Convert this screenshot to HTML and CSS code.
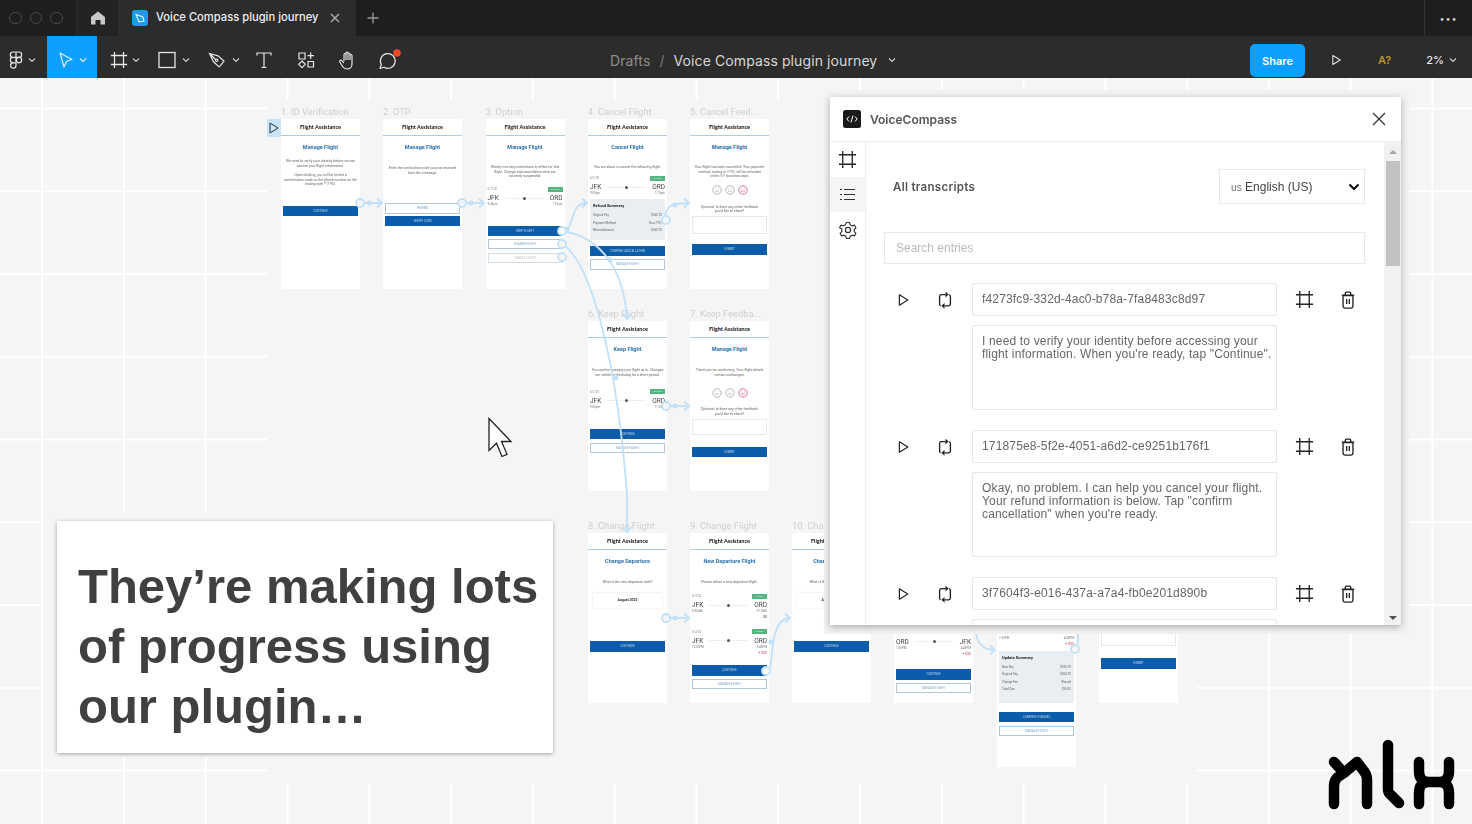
FILE: index.html
```html
<!DOCTYPE html>
<html lang="en">
<head>
  <meta charset="UTF-8">
  <title>Voice Compass plugin journey</title>
  <link rel="stylesheet" href="styles.css">
</head>
<body>
  <!-- shared icons -->
  <svg class="sprite" width="0" height="0">
    <symbol id="i-frame" viewBox="0 0 20 20"><path d="M5 1v18M15 1v18M1 5h18M1 15h18" fill="none" stroke="currentColor" stroke-width="1.4"/></symbol>
    <symbol id="i-play" viewBox="0 0 20 20"><path d="M5.5 3.5v13l10.5-6.5z" fill="none" stroke="currentColor" stroke-width="1.5" stroke-linejoin="round"/></symbol>
    <symbol id="i-loop" viewBox="0 0 20 20"><path d="M5 16.5Q4 16 4 14.5V6q0-2 2-2h4.500M14.500 4Q16 4.500 16 6v8.500q0 2-2 2H9.500" fill="none" stroke="currentColor" stroke-width="1.500"/><path d="M10.500 .8L14 4l-3.500 3.200zM9.500 13.300L6 16.500l3.500 3.200z" fill="currentColor"/></symbol>
    <symbol id="i-trash" viewBox="0 0 20 20"><path d="M4.500 5h11v12a2 2 0 0 1-2 2h-7a2 2 0 0 1-2-2zM3 4.500h14M7 4.500V2.500q0-1.200 1.200-1.200h3.600q1.200 0 1.200 1.200v2M8.500 9v5.500M11.500 9v5.500" fill="none" stroke="currentColor" stroke-width="1.500"/></symbol>
    <symbol id="i-chev" viewBox="0 0 8 8"><path d="M1 2.500l3 3 3-3" fill="none" stroke="currentColor" stroke-width="1.1"/></symbol>
    <symbol id="i-face" viewBox="0 0 10 10"><circle cx="5" cy="5" r="4.2" fill="none" stroke="currentColor" stroke-width=".7"/><path d="M3 3.800h.8M6.200 3.800H7M3 6.600c1.200-1 2.800-1 4 0" fill="none" stroke="currentColor" stroke-width=".6"/></symbol>
  </svg>

  <!-- Tabs -->
  <div class="tabbar">
    <div class="traffic"><i></i><i></i><i></i></div>
    <div class="home-tab">
      <svg width="16" height="16" viewBox="0 0 16 16"><path d="M8 1.500L15 7v7.500h-4.500V10h-5v4.500H1V7z" fill="#c9c9c9"/></svg>
    </div>
    <div class="file-tab">
      <svg width="16" height="16" viewBox="0 0 16 16"><rect width="16" height="16" rx="3" fill="#1b9be8"/><path d="M4 4.500l7 2.500 1 4-5 .8z" fill="none" stroke="#e7f5ff" stroke-width="1.100"/></svg>
      <span class="file-name">Voice Compass plugin journey</span>
      <svg class="tab-close" width="10" height="10" viewBox="0 0 10 10"><path d="M1 1l8 8M9 1l-8 8" stroke="#a8a8a8" stroke-width="1.500"/></svg>
    </div>
    <svg class="tab-add" width="12" height="12" viewBox="0 0 12 12"><path d="M6 .5v11M.5 6h11" stroke="#9a9a9a" stroke-width="1.300"/></svg>
    <div class="tab-more">&#8226;&#8226;&#8226;</div>
  </div>

  <!-- Figma toolbar -->
  <div class="toolbar">
    <div class="tools">
      <div class="tool tool-menu">
        <svg width="14" height="18" viewBox="0 0 14 18" fill="none" stroke="#e6e6e6" stroke-width="1.200"><path d="M7 1H4a2.700 2.700 0 0 0 0 5.400h3zM7 1h3a2.700 2.700 0 0 1 0 5.400H7zM7 6.400H4a2.700 2.700 0 0 0 0 5.400h3zM7 11.800H4A2.700 2.700 0 1 0 7 14.500z"/><circle cx="10" cy="9.100" r="2.700"/></svg>
        <svg class="chev" width="8" height="8"><use href="#i-chev"/></svg>
      </div>
      <div class="tool tool-move">
        <svg width="16" height="18" viewBox="0 0 16 18"><path d="M2 2l12 6.500-5.300 1.700L6 16z" fill="none" stroke="#dff2ff" stroke-width="1.200" stroke-linejoin="round"/></svg>
        <svg class="chev" width="8" height="8"><use href="#i-chev"/></svg>
      </div>
      <div class="tool tool-frame">
        <svg width="18" height="18"><use href="#i-frame"/></svg>
        <svg class="chev" width="8" height="8"><use href="#i-chev"/></svg>
      </div>
      <div class="tool tool-rect">
        <svg width="18" height="18" viewBox="0 0 18 18"><rect x="1" y="1.500" width="16" height="15" fill="none" stroke="currentColor" stroke-width="1.300"/></svg>
        <svg class="chev" width="8" height="8"><use href="#i-chev"/></svg>
      </div>
      <div class="tool tool-pen">
        <svg width="18" height="18" viewBox="0 0 18 18" fill="none" stroke="currentColor" stroke-width="1.200"><path d="M1.500 2.500L10 4.800l6 5.200-4.800 6-5.700-5.200zM1.500 2.500l6 6"/><circle cx="8.700" cy="9.300" r="1.200"/></svg>
        <svg class="chev" width="8" height="8"><use href="#i-chev"/></svg>
      </div>
      <div class="tool tool-text">
        <svg width="16" height="18" viewBox="0 0 16 18" fill="none" stroke="currentColor" stroke-width="1.200"><path d="M1 4.500V2h14v2.500M8 2v14M5.500 16.500h5"/></svg>
      </div>
      <div class="tool tool-comps">
        <svg width="18" height="18" viewBox="0 0 18 18" fill="none" stroke="currentColor" stroke-width="1.200"><path d="M2 2h6v6H2zM11 10.500h5.500V16H11zM5 10l3.300 3.300L5 16.600l-3.300-3.300zM13.700 1.500v6.500M10.500 4.700H17"/></svg>
      </div>
      <div class="tool tool-hand">
        <svg width="20" height="20" viewBox="0 0 20 20" fill="none" stroke="currentColor" stroke-width="1.200" stroke-linejoin="round"><path d="M6 11V4.500a1 1 0 0 1 2 0V3a1 1 0 0 1 2 0v1a1 1 0 0 1 2 0v1.500a1 1 0 0 1 2 0V14c0 3-2 5-4.500 5S5.500 18 4 15.500L1.800 12c-.8-1.400 1-2.400 2-1.300L6 13M8 4.500V10M10 4v6M12 5v5"/></svg>
      </div>
      <div class="tool tool-comment">
        <svg width="22" height="22" viewBox="0 0 22 22"><path d="M3 19.500l1.300-4A7.400 7.400 0 1 1 7 18.300z" fill="none" stroke="currentColor" stroke-width="1.200" stroke-linejoin="round"/><circle cx="20" cy="4" r="3.800" fill="#f24822"/></svg>
      </div>
    </div>
    <div class="crumbs">
      <span class="crumb-root">Drafts</span>
      <span class="crumb-sep">/</span>
      <span class="crumb-file">Voice Compass plugin journey</span>
      <svg class="chev" width="8" height="8"><use href="#i-chev"/></svg>
    </div>
    <div class="actions">
      <button class="share">Share</button>
      <svg class="present" width="14" height="14"><use href="#i-play"/></svg>
      <span class="missing">A?</span>
      <span class="zoom">2%</span>
      <svg class="chev" width="8" height="8"><use href="#i-chev"/></svg>
    </div>
  </div>

  <!-- Canvas -->
  <div class="canvas">
    <div class="mask-section"></div>

    <div class="flow-start">
      <svg width="10" height="12" viewBox="0 0 10 12"><path d="M1 1v10l8-5z" fill="none" stroke="#333" stroke-width="1"/></svg>
    </div>

    <div class="frame f1">
      <div class="frame-label">1. ID Verification</div>
      <div class="frame-head">Flight Assistance</div>
      <div class="frame-title">Manage Flight</div>
      <p class="frame-text mt9">We need to verify your identity before we can<br>access your flight information.</p>
      <p class="frame-text mt5">Upon clicking, you will be texted a<br>confirmation code on the phone number on file<br>ending with **7792.</p>
      <div class="btn mt19">CONTINUE</div>
    </div>

    <div class="frame f2">
      <div class="frame-label">2. OTP</div>
      <div class="frame-head">Flight Assistance</div>
      <div class="frame-title">Manage Flight</div>
      <p class="frame-text mt16">Enter the verification code you just received<br>from the message.</p>
      <div class="btn btn-line btn-tall mt28">RESEND</div>
      <div class="btn mt2">VERIFY CODE</div>
    </div>

    <div class="frame f3">
      <div class="frame-label">3. Option</div>
      <div class="frame-head">Flight Assistance</div>
      <div class="frame-title">Manage Flight</div>
      <p class="frame-text mt15">Weekly morning restrictions in effect for this<br>flight. Change and cancellation fees are<br>currently suspended.</p>
      <div class="leg mt8">
        <div class="leg-top"><span>6/1/20</span><b>On time</b></div>
        <div class="leg-route"><span>JFK</span><i></i><span>ORD</span></div>
        <div class="leg-times"><span>9:05pm</span><span>1:10am</span></div>
      </div>
      <div class="btn mt20">KEEP FLIGHT</div>
      <div class="btn btn-line mt3">CHANGE FLIGHT</div>
      <div class="btn btn-line btn-muted mt4">CANCEL FLIGHT</div>
    </div>

    <div class="frame f4">
      <div class="frame-label">4. Cancel Flight</div>
      <div class="frame-head">Flight Assistance</div>
      <div class="frame-title">Cancel Flight</div>
      <p class="frame-text mt15">You are about to cancel the following flight.</p>
      <div class="leg mt6">
        <div class="leg-top"><span>6/1/20</span><b>On time</b></div>
        <div class="leg-route"><span>JFK</span><i></i><span>ORD</span></div>
        <div class="leg-times"><span>9:05pm</span><span>1:10am</span></div>
      </div>
      <div class="summary summary-refund mt4">
        <strong>Refund Summary</strong>
        <div class="summary-row"><span>Original Pay</span><span>$360.70</span></div>
        <div class="summary-row"><span>Payment Method</span><span>Visa 7792</span></div>
        <div class="summary-row"><span>Refund Amount</span><span>$360.70</span></div>
      </div>
      <div class="btn mt6">CONFIRM CANCELLATION</div>
      <div class="btn btn-line btn-tall mt3">MANAGE FLIGHT</div>
    </div>

    <div class="frame f5">
      <div class="frame-label">5. Cancel Feed...</div>
      <div class="frame-head">Flight Assistance</div>
      <div class="frame-title">Manage Flight</div>
      <p class="frame-text mt15">Your flight has been cancelled. Your payment<br>method, ending in 7792, will be refunded<br>within 5-7 business days.</p>
      <div class="faces mt6"><svg><use href="#i-face"/></svg><svg><use href="#i-face"/></svg><svg class="face-on"><use href="#i-face"/></svg></div>
      <p class="frame-text mt10">Optional: Is there any other feedback<br>you'd like to share?</p>
      <div class="note note-lg mt2"></div>
      <div class="btn btn-tall mt10">SUBMIT</div>
    </div>

    <div class="frame f6">
      <div class="frame-label">6. Keep Flight</div>
      <div class="frame-head">Flight Assistance</div>
      <div class="frame-title">Keep Flight</div>
      <p class="frame-text mt16">You confirm keeping your flight as is. Changes<br>are visible in the dialog for a short period.</p>
      <div class="leg mt12">
        <div class="leg-top"><span>6/1/20</span><b>On time</b></div>
        <div class="leg-route"><span>JFK</span><i></i><span>ORD</span></div>
        <div class="leg-times"><span>9:05pm</span><span>1:10am</span></div>
      </div>
      <div class="btn mt20">CONTINUE</div>
      <div class="btn btn-line mt4">MANAGE FLIGHT</div>
    </div>

    <div class="frame f7">
      <div class="frame-label">7. Keep Feedba...</div>
      <div class="frame-head">Flight Assistance</div>
      <div class="frame-title">Manage Flight</div>
      <p class="frame-text mt16">Thank you for confirming. Your flight details<br>remain unchanged.</p>
      <div class="faces mt11"><svg><use href="#i-face"/></svg><svg><use href="#i-face"/></svg><svg class="face-on"><use href="#i-face"/></svg></div>
      <p class="frame-text mt9">Optional: Is there any other feedback<br>you'd like to share?</p>
      <div class="note mt3"></div>
      <div class="btn mt12">SUBMIT</div>
    </div>

    <div class="frame f8">
      <div class="frame-label">8. Change Flight</div>
      <div class="frame-head">Flight Assistance</div>
      <div class="frame-title">Change Departure</div>
      <p class="frame-text mt16">What is the new departure date?</p>
      <div class="date-box mt8">August 2022</div>
      <div class="btn btn-tall mt33">CONTINUE</div>
    </div>

    <div class="frame f9">
      <div class="frame-label">9. Change Flight</div>
      <div class="frame-head">Flight Assistance</div>
      <div class="frame-title">New Departure Flight</div>
      <p class="frame-text mt16">Please select a new departure flight.</p>
      <div class="leg mt9">
        <div class="leg-top"><span>6/2/20</span><b>On time</b></div>
        <div class="leg-route"><span>JFK</span><i></i><span>ORD</span></div>
        <div class="leg-times"><span>6:05AM</span><span>9:10AM</span></div>
        <div class="leg-price">$0</div>
      </div>
      <div class="leg mt10">
        <div class="leg-top"><span>6/2/20</span><b>On time</b></div>
        <div class="leg-route"><span>JFK</span><i></i><span>ORD</span></div>
        <div class="leg-times"><span>12:00PM</span><span>3:45PM</span></div>
        <div class="leg-price leg-more">+ $35</div>
      </div>
      <div class="btn btn-tall mt10">CONTINUE</div>
      <div class="btn btn-line mt3">MANAGE FLIGHT</div>
    </div>

    <div class="frame f10">
      <div class="frame-label">10. Change Flight</div>
      <div class="frame-head">Flight Assistance</div>
      <div class="frame-title">Change Return</div>
      <p class="frame-text mt16">What is the new return date?</p>
      <div class="date-box mt8">August 2022</div>
      <div class="btn btn-tall mt33">CONTINUE</div>
    </div>

    <!-- frames 11-13: their tops sit behind the plugin window -->
    <div class="frame f11">
      <div class="leg mt102">
        <div class="leg-route"><span>ORD</span><i></i><span>JFK</span></div>
        <div class="leg-times"><span>1:00PM</span><span>4:45PM</span></div>
        <div class="leg-price leg-more">+ $35</div>
      </div>
      <div class="btn btn-tall mt13">CONTINUE</div>
      <div class="btn btn-line mt3">MANAGE FLIGHT</div>
    </div>

    <div class="frame f12">
      <div class="leg mt102">
        <div class="leg-times"><span>1:00PM</span><span>4:45PM</span></div>
        <div class="leg-price leg-more">+ $35</div>
      </div>
      <div class="summary summary-update mt5">
        <strong>Update Summary</strong>
        <div class="summary-row"><span>New Pay</span><span>$395.70</span></div>
        <div class="summary-row"><span>Original Pay</span><span>$360.70</span></div>
        <div class="summary-row"><span>Change Fee</span><span>Waived</span></div>
        <div class="summary-row"><span>Total Due</span><span>$35.00</span></div>
      </div>
      <div class="btn mt9">CONFIRM CHANGES</div>
      <div class="btn btn-line mt4">MANAGE FLIGHT</div>
    </div>

    <div class="frame f13">
      <div class="note note-lg mt95"></div>
      <div class="btn btn-tall mt12">SUBMIT</div>
    </div>

    <!-- prototype connections, page coordinates minus the 78px toolbars -->
    <svg class="links" width="1472" height="746" viewBox="0 78 1472 746">
      <g fill="none" stroke="#c2e1f8" stroke-width="1.800">
        <path d="M364 203h18M377 198.500l5 4.500-5 4.500"/>
        <path d="M466 203h18M479 198.500l5 4.500-5 4.500"/>
        <path d="M562 231c14 0 6-28 25-28M582 198.500l5 4.500-5 4.500"/>
        <path d="M562 231c40 6 62 40 65 88M622.500 314l4.500 5 4.500-5"/>
        <path d="M562 244c30 18 55 120 65 250v38M622.500 527l4.500 5 4.500-5"/>
        <path d="M665 216c2-10 6-13 24-13M684 198.500l5 4.500-5 4.500"/>
        <path d="M670 406h19M684 401.500l5 4.500-5 4.500"/>
        <path d="M670 618h19M684 613.500l5 4.500-5 4.500"/>
        <path d="M770 668c3-8 0-50 20-50M785 613.500l5 4.500-5 4.500"/>
        <path d="M976 634c2 10 8 16 19 16M990 645.500l5 4.500-5 4.500"/>
        <path d="M1078 634v10"/>
        <circle cx="360" cy="203" r="4" fill="#f5f5f5"/>
        <circle cx="462" cy="203" r="4" fill="#f5f5f5"/>
        <circle cx="562" cy="231" r="4" fill="#fff"/>
        <circle cx="562" cy="244" r="4" fill="#f5f5f5"/>
        <circle cx="562" cy="257" r="4" fill="#f5f5f5"/>
        <circle cx="666" cy="220" r="4" fill="#f5f5f5"/>
        <circle cx="666" cy="406" r="4" fill="#f5f5f5"/>
        <circle cx="666" cy="618" r="4" fill="#f5f5f5"/>
        <circle cx="766" cy="671" r="4" fill="#fff"/>
        <circle cx="1075" cy="649" r="4" fill="#f5f5f5"/>
      </g>
      <g fill="#c2e1f8">
        <circle cx="369" cy="203" r="2.500"/>
        <circle cx="471" cy="203" r="2.500"/>
        <circle cx="567" cy="229" r="2.500"/>
        <circle cx="675" cy="205" r="2.500"/>
        <circle cx="675" cy="406" r="2.500"/>
        <circle cx="675" cy="618" r="2.500"/>
        <circle cx="771" cy="642" r="2.500"/>
        <circle cx="610" cy="260" r="2.500"/>
        <circle cx="616" cy="378" r="2.500"/>
      </g>
    </svg>

    <div class="mask-card"></div>
    <div class="mask-plugin"></div>

    <!-- Slide callout -->
    <div class="callout">They&rsquo;re making lots of progress using our plugin&hellip;</div>

    <svg class="cursor" width="26" height="42" viewBox="0 0 26 42"><path d="M2 1.500v32l7.500-7.300 5.500 13.300 5-2.200-5.500-12.800h9.500z" fill="#fff" stroke="#222" stroke-width="1.300" stroke-linejoin="miter"/></svg>

    <!-- VoiceCompass plugin window -->
    <div class="plugin">
      <div class="plugin-head">
        <svg width="18" height="18" viewBox="0 0 18 18"><rect width="18" height="18" rx="2.500" fill="#1a1a1a"/><path d="M6 6.500L3.800 9 6 11.500M12 6.500L14.200 9 12 11.500M10 5.500L8 12.500" fill="none" stroke="#fff" stroke-width="1"/></svg>
        <span class="plugin-name">VoiceCompass</span>
        <svg class="plugin-close" width="14" height="14" viewBox="0 0 14 14"><path d="M1 1l12 12M13 1L1 13" stroke="#333" stroke-width="1.300"/></svg>
      </div>
      <div class="plugin-body">
        <div class="plugin-nav">
          <div class="nav-item"><svg width="19" height="19"><use href="#i-frame"/></svg></div>
          <div class="nav-item nav-on">
            <svg width="15" height="13" viewBox="0 0 15 13" fill="none" stroke="#333" stroke-width="1.200"><path d="M4 1.500H15M4 6.500H15M4 11.500H15M0 1.500h2M0 6.500h2M0 11.500h2"/></svg>
          </div>
          <div class="nav-item">
            <svg width="18" height="18" viewBox="0 0 18 18" fill="none" stroke="#333" stroke-width="1.200" stroke-linejoin="round"><path d="M7.500 1.500h3l.6 2.300 2.100 1 2.300-.6 1.400 2.600-1.700 1.700v2.100l1.700 1.700-1.400 2.600-2.300-.7-2.100 1.100-.6 2.200h-3l-.6-2.200-2.100-1.100-2.300.7-1.400-2.600 1.700-1.700V7.800L.5 6.800 1.900 4.200l2.300.6 2.100-1z"/><circle cx="9" cy="9" r="2.600"/></svg>
          </div>
        </div>
        <div class="plugin-main">
          <div class="plugin-top">
            <span class="all-label">All transcripts</span>
            <div class="lang"><span class="lang-flag">us</span> English (US)
              <svg width="12" height="8" viewBox="0 0 12 8"><path d="M1.500 1.500L6 6l4.500-4.500" fill="none" stroke="#111" stroke-width="2.200"/></svg>
            </div>
          </div>
          <div class="search">Search entries</div>

          <div class="entry">
            <div class="entry-row">
              <button class="icon-btn"><svg width="16" height="16"><use href="#i-play"/></svg></button>
              <button class="icon-btn"><svg width="18" height="18"><use href="#i-loop"/></svg></button>
              <div class="field field-id">f4273fc9-332d-4ac0-b78a-7fa8483c8d97</div>
              <button class="icon-btn"><svg width="19" height="19"><use href="#i-frame"/></svg></button>
              <button class="icon-btn"><svg width="18" height="18"><use href="#i-trash"/></svg></button>
            </div>
            <div class="field field-text">I need to verify your identity before accessing your flight information. When you're ready, tap "Continue".</div>
          </div>

          <div class="entry">
            <div class="entry-row">
              <button class="icon-btn"><svg width="16" height="16"><use href="#i-play"/></svg></button>
              <button class="icon-btn"><svg width="18" height="18"><use href="#i-loop"/></svg></button>
              <div class="field field-id">171875e8-5f2e-4051-a6d2-ce9251b176f1</div>
              <button class="icon-btn"><svg width="19" height="19"><use href="#i-frame"/></svg></button>
              <button class="icon-btn"><svg width="18" height="18"><use href="#i-trash"/></svg></button>
            </div>
            <div class="field field-text">Okay, no problem. I can help you cancel your flight. Your refund information is below. Tap "confirm cancellation" when you're ready.</div>
          </div>

          <div class="entry">
            <div class="entry-row">
              <button class="icon-btn"><svg width="16" height="16"><use href="#i-play"/></svg></button>
              <button class="icon-btn"><svg width="18" height="18"><use href="#i-loop"/></svg></button>
              <div class="field field-id">3f7604f3-e016-437a-a7a4-fb0e201d890b</div>
              <button class="icon-btn"><svg width="19" height="19"><use href="#i-frame"/></svg></button>
              <button class="icon-btn"><svg width="18" height="18"><use href="#i-trash"/></svg></button>
            </div>
            <div class="field field-text"></div>
          </div>
        </div>
        <div class="scrollbar">
          <span class="scroll-up"></span>
          <span class="scroll-thumb"></span>
          <span class="scroll-down"></span>
        </div>
      </div>
    </div>

    <!-- nlx logo -->
    <svg class="logo" width="132" height="72" viewBox="1327 738 132 72" fill="none" stroke="#000" stroke-width="10.500" stroke-linecap="round" stroke-linejoin="round">
      <path d="M1334 804v-18q0-6 4-9l6-4 13-11 6 8q4 4 4 10v24M1334 762l10 11"/>
      <path d="M1388 745v44q0 4 3 6l8 8"/>
      <path d="M1419 762v9q0 11 10 11h10q10 0 10-11v-9M1419 804v-11q0-11 10-11M1449 804v-11q0-11-10-11"/>
    </svg>
  </div>
</body>
</html>
```

FILE: styles.css
```css
* {
  margin: 0;
  padding: 0;
  box-sizing: border-box;
}

body {
  width: 1472px;
  height: 824px;
  overflow: hidden;
  font-family: Inter, "Liberation Sans", sans-serif;
  background-color: #f5f5f5;
}

.sprite {
  position: absolute;
}

/* Tabs */
.tabbar {
  display: flex;
  align-items: center;
  height: 36px;
  background-color: #1e1e1e;
}

.traffic {
  display: flex;
  gap: 8px;
  width: 77px;
  height: 100%;
  align-items: center;
  padding-left: 9px;
  border-right: 1px solid #2c2c2c;
}

.traffic i {
  width: 12.5px;
  height: 12.5px;
  border: 1px solid #4a4a4a;
  border-radius: 50%;
}

.home-tab {
  display: flex;
  align-items: center;
  justify-content: center;
  width: 41px;
  height: 100%;
  background-color: #232323;
}

.file-tab {
  display: flex;
  align-items: center;
  width: 238px;
  height: 100%;
  padding-left: 14px;
  background-color: #2c2c2c;
}

.file-name {
  margin: -2px 0 0 8px;
  font-size: 11.2px;
  font-weight: 500;
  color: #eee;
  white-space: nowrap;
}

.tab-close {
  margin-left: 12px;
}

.tab-add {
  margin-left: 11px;
}

.tab-more {
  display: flex;
  align-items: center;
  justify-content: center;
  width: 48px;
  height: 100%;
  margin-left: auto;
  border-left: 1px solid #333;
  font-size: 9px;
  letter-spacing: 1px;
  color: #ccc;
}

/* Toolbar */
.toolbar {
  position: relative;
  display: flex;
  align-items: center;
  height: 42px;
  background-color: #2c2c2c;
  color: #e6e6e6;
}

.tools {
  display: flex;
  height: 100%;
}

.tool {
  display: flex;
  align-items: center;
  justify-content: center;
  height: 100%;
  padding-top: 6px;
}

.chev {
  color: #cfcfcf;
}

.tool-menu { width: 47px; gap: 5px; padding-right: 3px; }
.tool-move { width: 50px; gap: 5px; background-color: #0c9fff; }
.tool-move .chev { color: #dff2ff; }
.tool-frame { width: 49px; gap: 4px; padding-left: 6px; }
.tool-rect { width: 49px; gap: 6px; padding-left: 6px; }
.tool-pen { width: 49px; gap: 6px; padding-left: 8px; }
.tool-text { width: 35px; padding-left: 4px; }
.tool-comps { width: 49px; padding-left: 5px; }
.tool-hand { width: 32px; padding-left: 8px; }
.tool-comment { width: 50px; padding-left: 6px; }
.tool-comment svg { overflow: visible; }

.crumbs {
  position: absolute;
  left: 610px;
  display: flex;
  align-items: center;
  margin-top: 6px;
  font-size: 14px;
  letter-spacing: .1px;
}

.crumb-root { color: #8c8c8c; }
.crumb-sep { margin: 0 9px; color: #777; }
.crumb-file { color: #d8d8d8; }
.crumbs .chev { margin-left: 11px; }

.actions {
  display: flex;
  align-items: center;
  height: 100%;
  margin-left: auto;
  padding: 6px 15px 0 0;
}

.share {
  width: 55px;
  height: 33px;
  margin-top: 1px;
  border: none;
  border-radius: 5px;
  background-color: #0c9fff;
  color: #fff;
  font: 600 11px Inter, sans-serif;
}

.present {
  margin-left: 24px;
  color: #e6e6e6;
}

.missing {
  margin-left: 35px;
  font-size: 11px;
  font-weight: 600;
  color: #b8902c;
}

.zoom {
  margin-left: 35px;
  margin-right: 5px;
  font-size: 11px;
  font-weight: 500;
}

/* Canvas */
.canvas {
  position: relative;
  height: 746px;
  overflow: hidden;
  background-color: #f5f5f5;
  background-image:
    linear-gradient(90deg, #fff 2px, transparent 2px),
    linear-gradient(#fff 2px, transparent 2px);
  background-size: 81.8px 82.75px;
  background-position: 41px 29.5px;
}

.mask-section {
  position: absolute;
  left: 267px;
  top: 22px;
  width: 930px;
  height: 683px;
  background-color: #f5f5f5;
}

.mask-card {
  position: absolute;
  left: 44px;
  top: 434px;
  width: 223px;
  height: 245px;
  background-color: #f5f5f5;
}

.mask-plugin {
  position: absolute;
  left: 824px;
  top: 12px;
  width: 585px;
  height: 544px;
  background-color: #f3f3f3;
}

.flow-start {
  position: absolute;
  left: 267px;
  top: 41px;
  display: flex;
  align-items: center;
  justify-content: center;
  width: 14px;
  height: 18px;
  background-color: #c8e4f8;
}

.links {
  position: absolute;
  left: 0;
  top: 0;
}

/* Journey frames */
.frame {
  position: absolute;
  display: flex;
  flex-direction: column;
  width: 79px;
  height: 170px;
  padding: 0 2px;
  background-color: #fff;
  font-family: Roboto, sans-serif;
  filter: blur(.3px);
}

.f1 { left: 281px; top: 41px; }
.f2 { left: 383px; top: 41px; }
.f3 { left: 485.5px; top: 41px; }
.f4 { left: 588px; top: 41px; }
.f5 { left: 690px; top: 41px; }
.f6 { left: 588px; top: 243px; }
.f7 { left: 690px; top: 243px; }
.f8 { left: 588px; top: 455px; }
.f9 { left: 690px; top: 455px; }
.f10 { left: 792px; top: 455px; }
.f11 { left: 894px; top: 455px; }
.f12 { left: 997px; top: 455px; height: 234px; }
.f13 { left: 1099px; top: 455px; }

.frame-label {
  position: absolute;
  left: 0;
  top: -13px;
  font-size: 9.3px;
  line-height: 12px;
  color: #cfcfcf;
  white-space: nowrap;
}

.frame-head {
  flex: none;
  height: 17px;
  margin: 0 -2px;
  border-bottom: 1px solid #a9cde8;
  font-family: Lato, sans-serif;
  font-size: 5.5px;
  font-weight: 700;
  line-height: 16px;
  text-align: center;
  color: #111;
}

.frame-title {
  flex: none;
  height: 6px;
  margin-top: 8px;
  font-size: 5.5px;
  font-weight: 700;
  line-height: 6px;
  text-align: center;
  color: #2f72ad;
  white-space: nowrap;
}

.frame-text {
  flex: none;
  font-size: 3.5px;
  line-height: 4.5px;
  text-align: center;
  color: #666;
  white-space: nowrap;
}

.btn {
  flex: none;
  height: 10px;
  background-color: #0b5cab;
  font-size: 3px;
  line-height: 10px;
  text-align: center;
  color: #b9d4ec;
}

.btn-tall {
  height: 11px;
  line-height: 11px;
}

.btn-line {
  border: 1px solid #b4c6d6;
  background-color: #fff;
  line-height: 8px;
  color: #7aa5cc;
}

.btn-line.btn-tall {
  line-height: 9px;
}

.btn-muted {
  border-color: #d5dde4;
  color: #bbb;
}

.leg {
  flex: none;
}

.leg-top {
  display: flex;
  align-items: center;
  justify-content: space-between;
  height: 5px;
  font-size: 3px;
  color: #888;
}

.leg-top b {
  width: 15px;
  height: 5px;
  background-color: #55b37e;
  font-size: 2.5px;
  font-weight: 400;
  line-height: 5px;
  text-align: center;
  color: #d7f0e0;
}

.leg-route {
  display: flex;
  align-items: center;
  justify-content: space-between;
  height: 7px;
  margin-top: 3px;
  font-size: 6.5px;
  color: #444;
}

.leg-route i {
  position: relative;
  flex: 1;
  height: 1px;
  margin: 0 6px;
  background-color: #eee;
}

.leg-route i::after {
  content: "";
  position: absolute;
  left: 50%;
  top: -1px;
  width: 3px;
  height: 3px;
  margin-left: -1.5px;
  border-radius: 50%;
  background-color: #555;
}

.leg-times {
  display: flex;
  justify-content: space-between;
  height: 4px;
  margin-top: .5px;
  font-size: 3px;
  line-height: 4px;
  color: #777;
}

.leg-price {
  height: 4px;
  margin-top: 2px;
  font-size: 3.5px;
  line-height: 4px;
  text-align: right;
  color: #444;
}

.leg-more {
  color: #c0395a;
}

.summary {
  flex: none;
  padding: 4px 3px;
  border-radius: 1px;
  background-color: #e9eef3;
  font-size: 3px;
  color: #666;
}

.summary strong {
  display: block;
  font-size: 4px;
  color: #222;
  margin-bottom: 5px;
}

.summary-row {
  display: flex;
  justify-content: space-between;
  height: 7.5px;
}

.summary-refund { height: 41px; }
.summary-update { height: 52px; }

.faces {
  flex: none;
  display: flex;
  justify-content: center;
  gap: 3px;
  height: 10px;
  color: #999;
}

.faces svg {
  width: 10px;
  height: 10px;
}

.face-on {
  color: #d2386c;
}

.note {
  flex: none;
  height: 16px;
  border: 1px solid #e8e8e8;
}

.note-lg {
  height: 18px;
}

.date-box {
  flex: none;
  height: 15px;
  margin: 0 3px;
  box-shadow: 0 0 2px rgba(0, 0, 0, .12);
  font-size: 3.5px;
  font-weight: 700;
  line-height: 15px;
  text-align: center;
  color: #333;
}

.mt2 { margin-top: 2px; }
.mt3 { margin-top: 3px; }
.mt4 { margin-top: 4px; }
.mt5 { margin-top: 5px; }
.mt6 { margin-top: 6px; }
.mt8 { margin-top: 8px; }
.mt9 { margin-top: 9px; }
.mt10 { margin-top: 10px; }
.mt11 { margin-top: 11px; }
.mt12 { margin-top: 12px; }
.mt13 { margin-top: 13px; }
.mt15 { margin-top: 15px; }
.mt16 { margin-top: 16px; }
.mt19 { margin-top: 19px; }
.mt20 { margin-top: 20px; }
.mt28 { margin-top: 28px; }
.mt33 { margin-top: 33px; }
.mt95 { margin-top: 95px; }
.mt102 { margin-top: 102px; }

/* Callout */
.callout {
  position: absolute;
  left: 57px;
  top: 443px;
  width: 496px;
  height: 232px;
  padding: 35px 0 0 21px;
  background-color: #fff;
  box-shadow: 0 1px 4px rgba(0, 0, 0, .35);
  font-family: "Liberation Sans", Arial, sans-serif;
  font-size: 49px;
  font-weight: 700;
  line-height: 60px;
  color: #404040;
}

.cursor {
  position: absolute;
  left: 487px;
  top: 339px;
}

/* Plugin window */
.plugin {
  position: absolute;
  left: 830px;
  top: 19px;
  display: flex;
  flex-direction: column;
  width: 571px;
  height: 528px;
  background-color: #fff;
  box-shadow: 0 2px 7px rgba(0, 0, 0, .3);
}

.plugin-head {
  flex: none;
  display: flex;
  align-items: center;
  height: 45px;
  padding: 0 15px 0 13px;
  border-bottom: 1px solid #eee;
}

.plugin-name {
  margin-left: 9px;
  font-size: 12px;
  font-weight: 600;
  color: #555;
}

.plugin-close {
  margin-left: auto;
}

.plugin-body {
  flex: 1;
  display: flex;
  min-height: 0;
}

.plugin-nav {
  flex: none;
  width: 36px;
  border-right: 1px solid #eee;
}

.nav-item {
  display: flex;
  align-items: center;
  justify-content: center;
  height: 35px;
  color: #222;
}

.nav-on {
  background-color: #f5f5f5;
}

.plugin-main {
  flex: 1;
  min-width: 0;
  padding: 27px 19px 0 18px;
  overflow: hidden;
}

.plugin-top {
  display: flex;
  align-items: center;
  justify-content: space-between;
  padding-left: 9px;
}

.all-label {
  font-size: 11.5px;
  font-weight: 600;
  letter-spacing: .3px;
  color: #555;
}

.lang {
  display: flex;
  align-items: center;
  gap: 3px;
  width: 146px;
  height: 35px;
  padding: 0 4px 0 11px;
  border: 1px solid #e8e8e8;
  font-family: "Liberation Sans", Arial, sans-serif;
  font-size: 12px;
  color: #444;
}

.lang-flag {
  font-size: 10.5px;
  color: #777;
}

.lang svg {
  margin-left: auto;
}

.search {
  height: 32px;
  margin-top: 28px;
  padding-left: 11px;
  border: 1px solid #e8e8e8;
  font-family: "Liberation Sans", Arial, sans-serif;
  font-size: 12px;
  line-height: 30px;
  color: #bbb;
}

.entry {
  margin-top: 19px;
}

.entry + .entry {
  margin-top: 20px;
}

.entry-row {
  display: flex;
  align-items: center;
}

.icon-btn {
  flex: none;
  display: flex;
  align-items: center;
  justify-content: center;
  width: 38px;
  height: 33px;
  border: none;
  background: none;
  color: #222;
}

.icon-btn:nth-child(2) { margin-left: 4px; }
.icon-btn:nth-child(4) { margin-left: 8px; }
.icon-btn:nth-child(5) { margin-left: 6px; }

.field {
  border: 1px solid #e6e6e6;
  border-radius: 2px;
  font-family: "Liberation Sans", Arial, sans-serif;
  font-size: 12px;
  letter-spacing: .16px;
  color: #666;
}

.field-id {
  flex: none;
  width: 305px;
  margin-left: 8px;
  height: 33px;
  padding-left: 9px;
  line-height: 31px;
}

.field-text {
  width: 305px;
  height: 85px;
  margin: 9px 0 0 88px;
  padding: 9px 4px 9px 9px;
  line-height: 13px;
}

.scrollbar {
  flex: none;
  display: flex;
  flex-direction: column;
  align-items: center;
  width: 17px;
  background-color: #f1f1f1;
}

.scroll-up,
.scroll-down {
  width: 0;
  height: 0;
  border-left: 4px solid transparent;
  border-right: 4px solid transparent;
}

.scroll-up {
  margin-top: 8px;
  border-bottom: 4px solid #a8a8a8;
}

.scroll-thumb {
  width: 14px;
  height: 105px;
  margin-top: 7px;
  background-color: #c1c1c1;
}

.scroll-down {
  margin-top: auto;
  margin-bottom: 5px;
  border-top: 4px solid #505050;
}

.logo {
  position: absolute;
  left: 1327px;
  top: 660px;
}
```
